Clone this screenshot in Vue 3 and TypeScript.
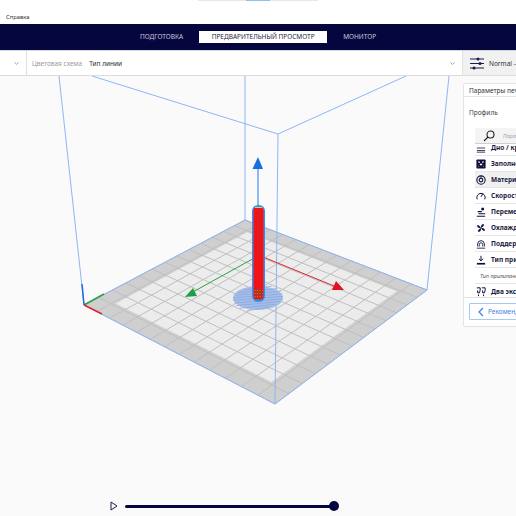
<script setup lang="ts">
interface Pt {
  x: number
  y: number
}

// plate corners on screen: back, right, front, left
const quad: Pt[] = [
  { x: 245, y: 219 },
  { x: 427, y: 289 },
  { x: 275, y: 403 },
  { x: 84, y: 304 }
]

function project(u: number, v: number): Pt {
  const [p0, p1, p2, p3] = quad
  const dx1 = p1.x - p2.x
  const dx2 = p3.x - p2.x
  const dx3 = p0.x - p1.x + p2.x - p3.x
  const dy1 = p1.y - p2.y
  const dy2 = p3.y - p2.y
  const dy3 = p0.y - p1.y + p2.y - p3.y
  const den = dx1 * dy2 - dx2 * dy1
  const g = (dx3 * dy2 - dx2 * dy3) / den
  const h = (dx1 * dy3 - dx3 * dy1) / den
  const a = p1.x - p0.x + g * p1.x
  const b = p3.x - p0.x + h * p3.x
  const d = p1.y - p0.y + g * p1.y
  const e = p3.y - p0.y + h * p3.y
  const w = g * u + h * v + 1
  return { x: (a * u + b * v + p0.x) / w, y: (d * u + e * v + p0.y) / w }
}

function poly(u0: number, v0: number, u1: number, v1: number): string {
  return [project(u0, v0), project(u1, v0), project(u1, v1), project(u0, v1)]
    .map((p) => `${p.x.toFixed(1)},${p.y.toFixed(1)}`)
    .join(' ')
}

const cells = 13
const band = 0.09
const gridLines = Array.from({ length: cells + 1 }, (_, i) => {
  const t = i / cells
  return [
    { a: project(t, 0), b: project(t, 1) },
    { a: project(0, t), b: project(1, t) }
  ]
}).flat()

const outerPlate = poly(0, 0, 1, 1)
const innerPlate = poly(band, band, 1 - band, 1 - band)

const hatch = Array.from({ length: 9 }, (_, i) => {
  const y = 287 + i * 2.6
  const half = 25 * Math.sqrt(Math.max(0, 1 - ((y - 297) / 12) ** 2))
  return { x1: 258 - half, x2: 258 + half, y1: y + 2, y2: y - 2 }
})

const rows = [
  { name: 'Заполнение', icon: 'infill' },
  { name: 'Материал', icon: 'material', active: true },
  { name: 'Скорость', icon: 'speed' },
  { name: 'Перемещения', icon: 'travel' },
  { name: 'Охлаждение', icon: 'fan' },
  { name: 'Поддержки', icon: 'support' },
  { name: 'Тип прилипания к столу', icon: 'adhesion' }
]
</script>

<template>
  <div class="app">
    <div class="menu-bar">
      <div class="top-tabs"><i class="tab-a"></i><i class="tab-b"></i><i class="tab-c"></i></div>
      <span class="menu-item">Справка</span>
    </div>

    <nav class="stage-nav">
      <span class="stage">ПОДГОТОВКА</span>
      <span class="stage current">ПРЕДВАРИТЕЛЬНЫЙ ПРОСМОТР</span>
      <span class="stage">МОНИТОР</span>
    </nav>

    <div class="toolbar">
      <div class="tool-left">
        <svg class="chevron" width="5" height="3" viewBox="0 0 8 5"><path d="M.5.5 4 4 7.5.5" /></svg>
      </div>
      <div class="scheme">
        <span class="scheme-label">Цветовая схема</span>
        <span class="scheme-value">Тип линии</span>
        <svg class="chevron push" width="5" height="3" viewBox="0 0 8 5"><path d="M.5.5 4 4 7.5.5" /></svg>
      </div>
      <div class="profile-tab">
        <svg width="14" height="13" viewBox="0 0 14 13" class="sliders">
          <path d="M0 2h14M0 6.500h14M0 11h14" />
          <circle cx="8" cy="2" r="1.500" />
          <circle cx="10" cy="6.500" r="1.500" />
          <circle cx="4" cy="11" r="1.500" />
        </svg>
        <span class="profile-name">Normal - 0.15mm</span>
      </div>
    </div>

    <main class="viewport">
      <svg class="scene" width="516" height="441" viewBox="0 75 516 441">
        <!-- plate -->
        <polygon :points="outerPlate" fill="#cfcfcf" />
        <polygon :points="innerPlate" fill="#ececec" />
        <line
          v-for="(l, i) in gridLines"
          :key="i"
          :x1="l.a.x"
          :y1="l.a.y"
          :x2="l.b.x"
          :y2="l.b.y"
          stroke="#bfbfbf"
          stroke-width="1"
        />

        <!-- build volume -->
        <g stroke="#8db6f4" stroke-width="1" fill="none">
          <polygon :points="outerPlate" />
          <path d="M84 304 59 75M275 403 278 133M427 289 449 75M245 219V75" />
          <path d="M92 75 278 133 406 75" />
        </g>

        <!-- axes at the corner -->
        <path d="M84 304 104 293" stroke="#2c9f47" stroke-width="1.500" />
        <path d="M84 304 102 313" stroke="#e0242c" stroke-width="1.500" />
        <path d="M84 304 82 283" stroke="#2268e0" stroke-width="1.500" />

        <!-- gizmo arrows -->
        <path d="M258 255 191 292" stroke="#2c9f47" stroke-width="1" />
        <polygon points="185,296 193,287 197,295" fill="#1f9e4a" />
        <path d="M263 256 334 285" stroke="#e0242c" stroke-width="1" />
        <polygon points="332,289 336,280 344,289" fill="#e0141e" />

        <!-- skirt -->
        <ellipse cx="258" cy="297" rx="25" ry="12" fill="#a6bfe9" />
        <line
          v-for="(h, i) in hatch"
          :key="'h' + i"
          :x1="h.x1"
          :y1="h.y1"
          :x2="h.x2"
          :y2="h.y2"
          stroke="#7f9fd8"
          stroke-width="0.6"
        />

        <!-- z arrow -->
        <path d="M258 167V205" stroke="#6aa5f2" stroke-width="1.500" />
        <polygon points="258,156 252.500,168 263,168" fill="#1a6fe0" />

        <!-- model -->
        <rect x="252" y="204" width="13" height="97" rx="6" fill="#3a8cf0" />
        <rect x="253.500" y="206.500" width="10" height="92" rx="3" fill="#f21414" />
        <path d="M258.500 208V254" stroke="#c02a40" stroke-width="0.700" />
        <path d="M255 206.500h7" stroke="#d8d840" stroke-width="1" />
        <rect x="254" y="287" width="9" height="11" rx="1.500" fill="#c22a1c" />
        <path d="M254.500 289.500h8M254.500 292.500h8M254.500 295.500h8" stroke="#d8a040" stroke-width="0.700" stroke-dasharray="1 1.500" />
      </svg>

      <section class="panel">
        <header class="panel-title">Параметры печати</header>
        <div class="profile-row">Профиль</div>
        <div class="search">
          <svg width="12" height="12" viewBox="0 0 12 12" class="search-icon">
            <circle cx="7.500" cy="4.500" r="3.500" />
            <path d="M5 7 1 11" />
          </svg>
          <span>Параметры поиска</span>
        </div>
        <div class="list">
          <div class="row clipped">
            <svg class="ico" viewBox="0 0 12 12"><path d="M1 6h10M1 9h10M1 11h10" stroke="#1b1b3f" fill="none" /></svg>
            <b>Дно / крышка</b>
          </div>
          <div v-for="r in rows" :key="r.name" class="row" :class="{ active: r.active }">
            <svg class="ico" viewBox="0 0 12 12">
              <template v-if="r.icon === 'infill'">
                <rect x="0.500" y="0.500" width="11" height="11" rx="1" fill="#10103a" />
                <path d="M3 3 9 9M9 3 3 9" stroke="#fff" stroke-width="1.500" stroke-dasharray="2 2" />
              </template>
              <template v-else-if="r.icon === 'material'">
                <circle cx="6" cy="6" r="5" fill="none" stroke="#10103a" stroke-width="1.300" />
                <circle cx="6" cy="6" r="2.200" fill="none" stroke="#10103a" stroke-width="1.300" />
                <path d="M6 1v4" stroke="#10103a" />
              </template>
              <template v-else-if="r.icon === 'speed'">
                <path d="M1.500 10A5 5 0 1 1 10.500 10" fill="none" stroke="#10103a" stroke-width="1.200" />
                <path d="M6 7 8 3.500" stroke="#10103a" stroke-width="1.200" />
              </template>
              <template v-else-if="r.icon === 'travel'">
                <path d="M1 11h10M3 8h8M2 5.500h5" stroke="#10103a" stroke-width="1.300" />
                <circle cx="8" cy="2.500" r="1.800" fill="#10103a" />
              </template>
              <template v-else-if="r.icon === 'fan'">
                <path d="M6 6C3 1 1 2 1.500 4S4 6 6 6C11 3 10 1 8 1.500S6 4 6 6C9 11 11 10 10.500 8S8 6 6 6C1 9 2 11 4 10.500S6 8 6 6Z" fill="#10103a" />
              </template>
              <template v-else-if="r.icon === 'support'">
                <path d="M2 9V6a4 4 0 0 1 8 0v3" fill="none" stroke="#10103a" stroke-width="1.100" />
                <path d="M1 11h10M4 9V6.500a2 2 0 0 1 4 0V9" fill="none" stroke="#10103a" />
              </template>
              <template v-else>
                <path d="M6 1v6M3.500 4.500 6 7l2.500-2.500" fill="none" stroke="#10103a" stroke-width="1.200" />
                <path d="M1 9.500h10v2H1z" fill="#10103a" />
              </template>
            </svg>
            <b>{{ r.name }}</b>
          </div>
          <div class="row note">Тип прилипания к столу</div>
          <div class="row">
            <svg class="ico" viewBox="0 0 12 12">
              <path d="M1 1h4v3L4 7H2V4M7 1h4v3l-1 3H8V4M3 9v2M9 9v2" fill="none" stroke="#10103a" stroke-width="1.200" />
            </svg>
            <b>Два экструдера</b>
          </div>
        </div>
        <footer class="panel-foot">
          <button class="back">
            <svg width="6" height="10" viewBox="0 0 6 10"><path d="M5 1 1 5l4 4" /></svg>
            Рекомендованный
          </button>
        </footer>
      </section>

      <div class="slider">
        <svg width="8" height="10" viewBox="0 0 8 10" class="play"><path d="M1 1v8l6-4z" /></svg>
        <div class="track"><i class="knob"></i></div>
      </div>
    </main>
  </div>
</template>

<style>
html,
body {
  margin: 0;
  background: #fafafa;
}
</style>

<style scoped>
.app {
  width: 516px;
  height: 516px;
  overflow: hidden;
  display: flex;
  flex-direction: column;
  font-family: 'Noto Sans', 'Open Sans', sans-serif;
  background: #fafafa;
}
.menu-bar {
  height: 24px;
  flex: none;
  background: #fff;
  box-sizing: border-box;
  padding: 13px 0 0 6px;
  position: relative;
}
.top-tabs {
  position: absolute;
  left: 198px;
  top: 0;
  display: flex;
}
.top-tabs i {
  display: block;
  height: 1px;
}
.tab-a {
  width: 48px;
  background: #e8e8e8;
}
.tab-b {
  width: 24px;
  background: #8ec0f4;
}
.tab-c {
  width: 48px;
  background: #e8e8e8;
}
.menu-item {
  display: block;
  font-size: 5.800px;
  line-height: 9px;
  color: #333;
}
.stage-nav {
  height: 27px;
  flex: none;
  background: #06063f;
  box-sizing: border-box;
  border-bottom: 1px solid #d8d8d8;
  display: flex;
  justify-content: center;
  align-items: center;
  gap: 16px;
}
.stage {
  color: #c8c8dc;
  font-size: 6.500px;
  line-height: 12px;
  white-space: nowrap;
}
.stage.current {
  background: #fff;
  color: #1b1b3f;
  width: 128px;
  text-align: center;
}
.toolbar {
  height: 25px;
  flex: none;
  display: flex;
  background: #fff;
  border-bottom: 1px solid #dcdcdc;
  box-sizing: border-box;
}
.tool-left {
  width: 27px;
  flex: none;
  box-sizing: border-box;
  border-right: 1px solid #e0e0e0;
  display: flex;
  align-items: center;
  padding-left: 14px;
}
.chevron path {
  fill: none;
  stroke: #808080;
  stroke-width: 1.200;
}
.scheme {
  flex: 1;
  display: flex;
  align-items: center;
  padding: 0 7px 0 5px;
  font-size: 6.500px;
}
.scheme-label {
  color: #9a9a9a;
  margin-right: 7px;
}
.scheme-value {
  color: #2b2b2b;
}
.push {
  margin-left: auto;
}
.profile-tab {
  width: 54px;
  flex: none;
  background: #f1f1f1;
  border-left: 1px solid #e0e0e0;
  box-sizing: border-box;
  display: flex;
  align-items: center;
  padding-left: 7px;
  gap: 5px;
  white-space: nowrap;
  overflow: hidden;
}
.sliders {
  flex: none;
}
.sliders path {
  stroke: #1b1b4a;
  stroke-width: 1.100;
  fill: none;
}
.sliders circle {
  fill: #1b1b4a;
}
.profile-name {
  font-size: 6.500px;
  color: #333;
}
.viewport {
  flex: 1;
  position: relative;
  overflow: hidden;
}
.scene {
  position: absolute;
  inset: 0;
  display: block;
}
.panel {
  position: absolute;
  left: 463px;
  top: 7px;
  width: 160px;
  height: 244px;
  background: #fff;
  border: 1px solid #e4e4e4;
  box-sizing: border-box;
  border-radius: 2px;
  display: flex;
  flex-direction: column;
  color: #1b1b3f;
  white-space: nowrap;
}
.panel-title {
  height: 13px;
  flex: none;
  box-sizing: border-box;
  padding-left: 5px;
  font-size: 6.500px;
  line-height: 13px;
  color: #333;
  border-bottom: 1px solid #e4e4e4;
}
.profile-row {
  height: 31px;
  flex: none;
  box-sizing: border-box;
  padding: 10px 0 0 5px;
  font-size: 6.500px;
  line-height: 12px;
  color: #444;
}
.search {
  height: 15px;
  flex: none;
  margin-left: 11px;
  background: #f4f4f4;
  border-bottom: 1px solid #cfcfcf;
  display: flex;
  align-items: center;
  gap: 8px;
  padding-left: 8px;
  font-size: 5.500px;
  font-style: italic;
  color: #a5a5b5;
}
.search-icon {
  flex: none;
}
.search-icon circle,
.search-icon path {
  fill: none;
  stroke: #222;
  stroke-width: 1.100;
}
.list {
  flex: 1;
  overflow: hidden;
  margin-left: 11px;
}
.row {
  height: 16px;
  box-sizing: border-box;
  display: flex;
  align-items: center;
  gap: 5px;
  padding-left: 1px;
  border-bottom: 1px solid #e6e6e6;
  font-size: 6.500px;
}
.row b {
  font-weight: 700;
  color: #1b1b3f;
}
.row.clipped {
  margin-top: -4px;
}
.row.active {
  background: #f0f0f0;
}
.row.note {
  font-size: 5.500px;
  font-style: italic;
  color: #555;
  padding-left: 5px;
}
.ico {
  width: 10px;
  height: 10px;
  flex: none;
}
.panel-foot {
  height: 29px;
  flex: none;
  box-sizing: border-box;
  border-top: 1px solid #e0e0e0;
  padding: 5px 0 0 5px;
}
.back {
  height: 17px;
  width: 140px;
  box-sizing: border-box;
  background: #fff;
  border: 1px solid #a8c8f4;
  border-radius: 1px;
  display: flex;
  align-items: center;
  gap: 4px;
  padding: 0 0 0 8px;
  font: inherit;
  font-size: 6.500px;
  color: #3c82e6;
  white-space: nowrap;
}
.back path {
  fill: none;
  stroke: #3c82e6;
  stroke-width: 1.200;
}
.slider {
  position: absolute;
  left: 110px;
  top: 425px;
  display: flex;
  align-items: center;
  gap: 7px;
}
.play path {
  fill: none;
  stroke: #1b1b4a;
  stroke-width: 1;
}
.track {
  width: 209px;
  height: 3px;
  border-radius: 2px;
  background: #06063f;
  position: relative;
}
.knob {
  position: absolute;
  right: -5px;
  top: -3.500px;
  width: 10px;
  height: 10px;
  border-radius: 50%;
  background: #06063f;
}
</style>
